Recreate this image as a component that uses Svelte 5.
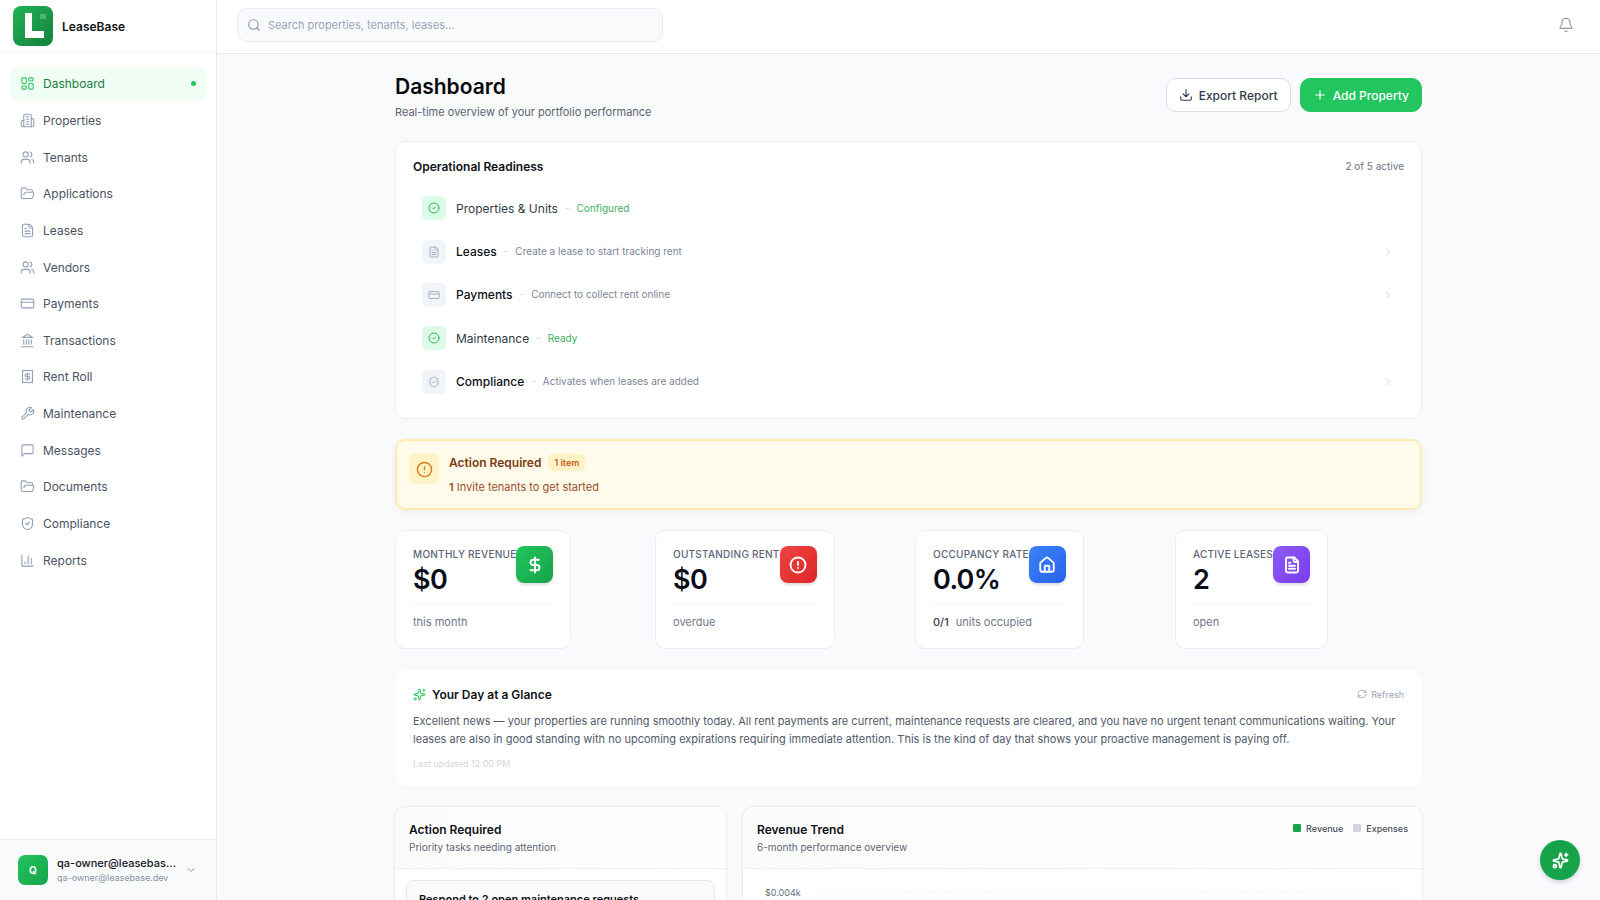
<script>
  const icons = {
    dashboard: '<rect x="3" y="3" width="7" height="9" rx="1.5"/><rect x="14" y="3" width="7" height="5" rx="1.5"/><rect x="14" y="12" width="7" height="9" rx="1.5"/><rect x="3" y="16" width="7" height="5" rx="1.5"/>',
    building: '<path d="M6 22V4a2 2 0 0 1 2-2h8a2 2 0 0 1 2 2v18Z"/><path d="M6 12H4a2 2 0 0 0-2 2v6a2 2 0 0 0 2 2h2"/><path d="M18 9h2a2 2 0 0 1 2 2v9a2 2 0 0 1-2 2h-2"/><path d="M10 6h4M10 10h4M10 14h4M10 18h4"/>',
    users: '<path d="M16 21v-2a4 4 0 0 0-4-4H6a4 4 0 0 0-4 4v2"/><circle cx="9" cy="7" r="4"/><path d="M22 21v-2a4 4 0 0 0-3-3.87"/><path d="M16 3.13a4 4 0 0 1 0 7.75"/>',
    folder: '<path d="m6 14 1.45-2.9A2 2 0 0 1 9.24 10H20a2 2 0 0 1 1.94 2.5l-1.55 6a2 2 0 0 1-1.94 1.5H4a2 2 0 0 1-2-2V5c0-1.1.9-2 2-2h3.93a2 2 0 0 1 1.66.9l.82 1.2a2 2 0 0 0 1.66.9H18a2 2 0 0 1 2 2v2"/>',
    file: '<path d="M15 2H6a2 2 0 0 0-2 2v16a2 2 0 0 0 2 2h12a2 2 0 0 0 2-2V7Z"/><path d="M14 2v4a2 2 0 0 0 2 2h4M10 9H8M16 13H8M16 17H8"/>',
    card: '<rect x="2" y="5" width="20" height="14" rx="2"/><path d="M2 10h20"/>',
    landmark: '<path d="M3 22h18M6 18v-7M10 18v-7M14 18v-7M18 18v-7M12 2l8 5H4Z"/>',
    receipt: '<path d="M4 2v20l2-1 2 1 2-1 2 1 2-1 2 1 2-1 2 1V2l-2 1-2-1-2 1-2-1-2 1-2-1-2 1Z"/><path d="M16 8h-6a2 2 0 1 0 0 4h4a2 2 0 1 1 0 4H8M12 17.5v-11"/>',
    wrench: '<path d="M14.7 6.3a1 1 0 0 0 0 1.4l1.6 1.6a1 1 0 0 0 1.4 0l3.77-3.77a6 6 0 0 1-7.94 7.94l-6.91 6.91a2.12 2.12 0 0 1-3-3l6.91-6.91a6 6 0 0 1 7.94-7.94l-3.76 3.76z"/>',
    message: '<path d="M21 15a2 2 0 0 1-2 2H7l-4 4V5a2 2 0 0 1 2-2h14a2 2 0 0 1 2 2z"/>',
    shield: '<path d="M20 13c0 5-3.5 7.5-7.66 8.95a1 1 0 0 1-.67-.01C7.5 20.5 4 18 4 13V6a1 1 0 0 1 1-1c2 0 4.5-1.2 6.24-2.72a1.17 1.17 0 0 1 1.52 0C14.51 3.81 17 5 19 5a1 1 0 0 1 1 1z"/><path d="m9 12 2 2 4-4"/>',
    chart: '<path d="M3 3v18h18M18 17V9M13 17V5M8 17v-3"/>',
    search: '<circle cx="11" cy="11" r="8"/><path d="m21 21-4.3-4.3"/>',
    bell: '<path d="M10.3 21a2 2 0 0 0 3.4 0"/><path d="M3.3 15.3A1 1 0 0 0 4 17h16a1 1 0 0 0 .7-1.7C19.4 14 18 12.5 18 8A6 6 0 0 0 6 8c0 4.5-1.4 6-2.7 7.3"/>',
    download: '<path d="M21 15v4a2 2 0 0 1-2 2H5a2 2 0 0 1-2-2v-4M7 10l5 5 5-5M12 15V3"/>',
    plus: '<path d="M5 12h14M12 5v14"/>',
    check: '<circle cx="12" cy="12" r="10"/><path d="m9 12 2 2 4-4"/>',
    alert: '<circle cx="12" cy="12" r="10"/><path d="M12 8v4M12 16h.01"/>',
    dollar: '<path d="M12 2v20M17 5H9.5a3.5 3.5 0 0 0 0 7h5a3.5 3.5 0 0 1 0 7H6"/>',
    house: '<path d="M15 21v-7a1 1 0 0 0-1-1h-4a1 1 0 0 0-1 1v7"/><path d="M3 10a2 2 0 0 1 .7-1.5l7-6a2 2 0 0 1 2.6 0l7 6A2 2 0 0 1 21 10v9a2 2 0 0 1-2 2H5a2 2 0 0 1-2-2z"/>',
    right: '<path d="m9 18 6-6-6-6"/>',
    down: '<path d="m6 9 6 6 6-6"/>',
    refresh: '<path d="M3 12a9 9 0 0 1 9-9 9.75 9.75 0 0 1 6.74 2.74L21 8M21 3v5h-5M21 12a9 9 0 0 1-9 9 9.75 9.75 0 0 1-6.74-2.74L3 16M8 16H3v5"/>',
    sparkles: '<path d="M11.02 2.81a1 1 0 0 1 1.96 0l1.05 5.56a2 2 0 0 0 1.6 1.6l5.56 1.05a1 1 0 0 1 0 1.96l-5.56 1.05a2 2 0 0 0-1.6 1.6l-1.05 5.56a1 1 0 0 1-1.96 0l-1.05-5.56a2 2 0 0 0-1.6-1.6l-5.56-1.05a1 1 0 0 1 0-1.96l5.56-1.05a2 2 0 0 0 1.6-1.6z"/><path d="M20 2v4M22 4h-4"/><circle cx="4" cy="20" r="2"/>'
  };

  const nav = [
    ['Dashboard', 'dashboard'], ['Properties', 'building'], ['Tenants', 'users'],
    ['Applications', 'folder'], ['Leases', 'file'], ['Vendors', 'users'],
    ['Payments', 'card'], ['Transactions', 'landmark'], ['Rent Roll', 'receipt'],
    ['Maintenance', 'wrench'], ['Messages', 'message'], ['Documents', 'folder'],
    ['Compliance', 'shield'], ['Reports', 'chart']
  ];

  const readiness = [
    { name: 'Properties & Units', note: 'Configured', icon: 'check', done: true },
    { name: 'Leases', note: 'Create a lease to start tracking rent', icon: 'file', done: false },
    { name: 'Payments', note: 'Connect to collect rent online', icon: 'card', done: false },
    { name: 'Maintenance', note: 'Ready', icon: 'check', done: true },
    { name: 'Compliance', note: 'Activates when leases are added', icon: 'shield', done: false }
  ];

  const stats = [
    { label: 'Monthly Revenue', value: '$0', note: 'this month', icon: 'dollar', tone: 'green' },
    { label: 'Outstanding Rent', value: '$0', note: 'overdue', icon: 'alert', tone: 'red' },
    { label: 'Occupancy Rate', value: '0.0%', strong: '0/1', note: 'units occupied', icon: 'house', tone: 'blue' },
    { label: 'Active Leases', value: '2', note: 'open', icon: 'file', tone: 'violet' }
  ];
</script>

{#snippet icon(name, size, weight = 2)}
  <svg class="icon" width={size} height={size} viewBox="0 0 24 24" fill="none" stroke="currentColor" stroke-width={weight} stroke-linecap="round" stroke-linejoin="round" aria-hidden="true">{@html icons[name]}</svg>
{/snippet}

<div class="shell">
  <aside class="sidebar">
    <div class="brand">
      <svg width="40" height="40" viewBox="0 0 40 40" aria-hidden="true">
        <defs>
          <linearGradient id="brand-fill" x1="0" y1="0" x2="1" y2="1">
            <stop offset="0" stop-color="#22b455" />
            <stop offset="1" stop-color="#15803d" />
          </linearGradient>
        </defs>
        <rect width="40" height="40" rx="8" fill="url(#brand-fill)" />
        <path d="M12 7h7v18h12v7H12z" fill="#fff" />
        <rect x="27" y="8" width="6" height="5" rx="1" fill="#5cc583" opacity=".7" />
      </svg>
      <span>LeaseBase</span>
    </div>
    <nav class="nav" aria-label="Main">
      {#each nav as [label, glyph], i}
        <a href="#{label}" class:active={i === 0}>
          {@render icon(glyph, 15, 1.75)}
          <span>{label}</span>
          {#if i === 0}<i class="dot"></i>{/if}
        </a>
      {/each}
    </nav>
    <button class="account" type="button">
      <span class="avatar">Q</span>
      <span class="who">
        <span class="who-name">qa-owner@leasebase.dev</span>
        <span class="who-mail">qa-owner@leasebase.dev</span>
      </span>
      {@render icon('down', 12)}
    </button>
  </aside>

  <div class="body">
    <header class="topbar">
      <label class="search">
        {@render icon('search', 14)}
        <input type="search" placeholder="Search properties, tenants, leases..." aria-label="Search" />
      </label>
      <button class="bell" type="button" aria-label="Notifications">{@render icon('bell', 16, 1.75)}</button>
    </header>

    <main class="main">
      <div class="content">
        <div class="page-head">
          <div>
            <h1>Dashboard</h1>
            <p>Real-time overview of your portfolio performance</p>
          </div>
          <div class="actions">
            <button class="btn" type="button">{@render icon('download', 14)}Export Report</button>
            <button class="btn primary" type="button">{@render icon('plus', 14)}Add Property</button>
          </div>
        </div>

        <section class="card readiness">
          <div class="row-head">
            <h2>Operational Readiness</h2>
            <span class="count">2 of 5 active</span>
          </div>
          <ul>
            {#each readiness as item}
              <li class:done={item.done}>
                <span class="tile">{@render icon(item.icon, 12)}</span>
                <span class="name">{item.name}</span>
                <span class="sep">-</span>
                <span class="note">{item.note}</span>
                {#if !item.done}<span class="go">{@render icon('right', 12)}</span>{/if}
              </li>
            {/each}
          </ul>
        </section>

        <section class="banner">
          <span class="banner-tile">{@render icon('alert', 17)}</span>
          <div>
            <div class="banner-head"><h2>Action Required</h2><span class="chip">1 item</span></div>
            <p><b>1</b> Invite tenants to get started</p>
          </div>
        </section>

        <section class="stats">
          {#each stats as s}
            <article class="card stat">
              <div class="stat-top">
                <div>
                  <div class="label">{s.label}</div>
                  <div class="value">{s.value}</div>
                </div>
                <span class="badge {s.tone}">{@render icon(s.icon, 18, 2.5)}</span>
              </div>
              <div class="stat-foot">
                {#if s.strong}<b>{s.strong}</b>{/if}<span>{s.note}</span>
              </div>
            </article>
          {/each}
        </section>

        <section class="glance">
          <div class="row-head">
            <h2><span class="spark">{@render icon('sparkles', 13)}</span>Your Day at a Glance</h2>
            <button class="refresh" type="button">{@render icon('refresh', 10)}Refresh</button>
          </div>
          <p>Excellent news — your properties are running smoothly today. All rent payments are current, maintenance requests are cleared, and you have no urgent tenant communications waiting. Your leases are also in good standing with no upcoming expirations requiring immediate attention. This is the kind of day that shows your proactive management is paying off.</p>
          <small>Last updated 12:00 PM</small>
        </section>

        <div class="panels">
          <section class="panel">
            <header>
              <div>
                <h2>Action Required</h2>
                <p>Priority tasks needing attention</p>
              </div>
            </header>
            <div class="tasks">
              <div class="task">Respond to 2 open maintenance requests</div>
            </div>
          </section>
          <section class="panel wide">
            <header>
              <div>
                <h2>Revenue Trend</h2>
                <p>6-month performance overview</p>
              </div>
              <div class="legend">
                <span><i class="rev"></i>Revenue</span>
                <span><i class="exp"></i>Expenses</span>
              </div>
            </header>
            <div class="plot">
              <span>$0.004k</span>
              <i class="gridline"></i>
            </div>
          </section>
        </div>
      </div>
    </main>
  </div>

  <button class="fab" type="button" aria-label="Assistant">{@render icon('sparkles', 17, 2.5)}</button>
</div>

<style>
  :global(body) {
    margin: 0;
    background: #f9fafc;
  }
  :global(*) {
    box-sizing: border-box;
  }
  .shell {
    display: flex;
    height: 100vh;
    overflow: hidden;
    font-family: Inter, "Liberation Sans", sans-serif;
    font-size: 12px;
    line-height: 17px;
    color: #0f1117;
  }
  button {
    font: inherit;
    cursor: pointer;
  }
  h1, h2, p, ul {
    margin: 0;
    padding: 0;
  }
  h2 {
    font-size: 12px;
    line-height: 17px;
    font-weight: 600;
  }
  .icon {
    display: block;
    flex: none;
  }

  .sidebar {
    flex: none;
    display: flex;
    flex-direction: column;
    width: 217px;
    background: #fff;
    border-right: 1px solid #e8ebf1;
  }
  .brand {
    display: flex;
    align-items: center;
    gap: 9px;
    height: 53px;
    padding-left: 13px;
    border-bottom: 1px solid #f3f4f7;
    font-weight: 600;
  }
  .nav {
    display: grid;
    grid-auto-rows: 1fr;
    gap: 3px;
    min-height: 510px;
    margin: 14px 10px auto;
  }
  .nav a {
    display: flex;
    align-items: center;
    gap: 8px;
    padding: 0 10px;
    border-radius: 10px;
    color: #4b5362;
    text-decoration: none;
  }
  .nav .icon {
    color: #94a0b8;
  }
  .nav .active {
    background: #f0fdf4;
    color: #1b7e40;
  }
  .nav .active .icon {
    color: #30c463;
  }
  .dot {
    width: 5px;
    height: 5px;
    margin-left: auto;
    border-radius: 50%;
    background: #22c55e;
  }
  .account {
    display: flex;
    align-items: center;
    gap: 9px;
    padding: 15px 18px;
    border: 0;
    border-top: 1px solid #eef0f4;
    background: #f9fafc;
    color: #8b93a3;
    text-align: left;
  }
  .avatar {
    display: grid;
    place-items: center;
    width: 30px;
    height: 30px;
    border-radius: 7px;
    background: linear-gradient(135deg, #22c55e, #16a34a);
    color: #fff;
    font-size: 10px;
    font-weight: 700;
  }
  .who {
    display: grid;
    width: 119px;
    white-space: nowrap;
  }
  .who-name {
    overflow: hidden;
    text-overflow: ellipsis;
    color: #14161c;
    font-size: 11px;
    font-weight: 500;
    line-height: 16px;
  }
  .who-mail {
    font-size: 9px;
    line-height: 14px;
  }

  .body {
    flex: 1;
    min-width: 0;
    display: flex;
    flex-direction: column;
  }
  .topbar {
    flex: none;
    display: flex;
    align-items: flex-start;
    justify-content: space-between;
    height: 54px;
    padding: 8px 20px;
    background: #fff;
    border-bottom: 1px solid #e5e8ee;
  }
  .search {
    display: flex;
    align-items: center;
    gap: 7px;
    width: 426px;
    height: 34px;
    padding: 0 9px;
    border: 1px solid #e8ebf1;
    border-radius: 10px;
    background: #f9fafc;
    color: #8d97ab;
  }
  .search input {
    flex: 1;
    padding: 0;
    border: 0;
    outline: 0;
    background: none;
    font: inherit;
    font-size: 11px;
  }
  .search input::placeholder {
    color: #9aa4b5;
  }
  .bell {
    padding: 9px 6px;
    border: 0;
    background: none;
    color: #9198a8;
  }

  .main {
    flex: 1;
    min-height: 0;
    padding: 19px 20px;
    overflow-y: auto;
    scrollbar-width: none;
  }
  .content {
    display: grid;
    gap: 20px;
    max-width: 1027px;
    margin: 0 auto;
  }
  .page-head {
    display: flex;
    align-items: flex-start;
    justify-content: space-between;
    padding-bottom: 1px;
  }
  h1 {
    margin-bottom: 4px;
    font-size: 21px;
    line-height: 27px;
    font-weight: 600;
    color: #08090c;
  }
  .page-head p {
    font-size: 11px;
    line-height: 16px;
    color: #5b6371;
  }
  .actions {
    display: flex;
    gap: 9px;
    padding-top: 5px;
  }
  .btn {
    display: flex;
    align-items: center;
    gap: 6px;
    height: 34px;
    padding: 0 12px;
    border: 1px solid #d9dde4;
    border-radius: 10px;
    background: #fff;
    color: #363c48;
    font-weight: 500;
  }
  .btn.primary {
    border-color: #22c55e;
    background: #22c55e;
    color: #fff;
  }
  .card {
    border: 1px solid #eaedf2;
    border-radius: 10px;
    background: #fff;
  }
  .row-head {
    display: flex;
    justify-content: space-between;
  }
  .readiness {
    padding: 16px 17px;
  }
  .count {
    font-size: 10px;
    color: #6b7386;
  }
  .readiness ul {
    display: grid;
    grid-auto-rows: 1fr;
    gap: 3px;
    min-height: 214px;
    margin-top: 13px;
    list-style: none;
  }
  .readiness li {
    display: flex;
    align-items: center;
    padding: 0 10px 0 9px;
    font-size: 12px;
  }
  .tile {
    display: grid;
    place-items: center;
    width: 24px;
    height: 24px;
    margin-right: 10px;
    border-radius: 5px;
    background: #f1f5f9;
    color: #a5adbc;
  }
  .done .tile {
    background: #dcfce7;
    color: #36b562;
  }
  .name {
    font-weight: 500;
  }
  .done .name {
    color: #343b48;
    font-weight: 400;
  }
  .sep {
    margin: 0 7px;
    font-size: 10px;
    color: #cdd2db;
  }
  .note {
    font-size: 10px;
    color: #7d8596;
  }
  .done .note {
    color: #3fae62;
  }
  .go {
    margin-left: auto;
    color: #cbd0d8;
  }

  .banner {
    display: flex;
    gap: 10px;
    padding: 13px 12px;
    border: 2px solid #fdebb0;
    border-radius: 10px;
    background: #fffbeb;
    box-shadow: 0 3px 8px rgba(20, 40, 30, 0.05);
  }
  .banner-tile {
    display: grid;
    place-items: center;
    width: 30px;
    height: 30px;
    border-radius: 5px;
    background: #fef3c7;
    color: #dd7a1c;
  }
  .banner-head {
    display: flex;
    gap: 7px;
    margin-bottom: 8px;
  }
  .banner h2 {
    color: #7a3a12;
  }
  .chip {
    padding: 0 6px;
    border-radius: 5px;
    background: #fef3c7;
    color: #c0601a;
    font-size: 9px;
    font-weight: 600;
  }
  .banner p {
    font-size: 11px;
    line-height: 16px;
    color: #99502c;
  }
  .banner b {
    font-weight: 600;
  }

  .stats {
    display: grid;
    grid-template-columns: repeat(4, 1fr);
    gap: 13px;
    justify-items: start;
  }
  .stat {
    padding: 15px 17px 18px;
    white-space: nowrap;
  }
  .stat-top {
    display: flex;
    align-items: flex-start;
    padding-bottom: 7px;
    border-bottom: 1px solid #f4f5f8;
  }
  .label {
    margin-bottom: 2px;
    font-size: 10px;
    line-height: 16px;
    font-weight: 500;
    letter-spacing: 0.025em;
    text-transform: uppercase;
    color: #5c6478;
  }
  .value {
    font-size: 27px;
    line-height: 32px;
    font-weight: 600;
    letter-spacing: -0.025em;
    color: #0b0d1a;
  }
  .badge {
    display: grid;
    place-items: center;
    width: 37px;
    height: 37px;
    border-radius: 8px;
    color: #fff;
    box-shadow: 0 2px 3px rgba(15, 23, 42, 0.14);
  }
  .green { background: linear-gradient(135deg, #22c55e, #16a34a); }
  .red { background: linear-gradient(135deg, #ef4444, #dc2626); }
  .blue { background: linear-gradient(135deg, #3b82f6, #2563eb); }
  .violet { background: linear-gradient(135deg, #8b5cf6, #7c3aed); }
  .stat-foot {
    display: flex;
    gap: 7px;
    padding-top: 10px;
    font-size: 11px;
    line-height: 16px;
    color: #6f778a;
  }
  .stat-foot b {
    color: #3a4150;
    font-weight: 500;
  }

  .glance {
    padding: 17px 18px;
    border-radius: 13px;
    background: #fff;
    box-shadow: 0 0 1px rgba(15, 23, 42, 0.08);
  }
  .glance h2 {
    display: flex;
    align-items: center;
    gap: 6px;
  }
  .spark {
    color: #36c968;
  }
  .refresh {
    display: flex;
    align-items: center;
    gap: 4px;
    height: 16px;
    padding: 0;
    border: 0;
    background: none;
    color: #9ba3b3;
    font-size: 9px;
  }
  .glance p {
    margin: 9px 0 10px;
    font-size: 11px;
    line-height: 18px;
    color: #525a69;
  }
  .glance small {
    display: block;
    font-size: 9px;
    line-height: 12px;
    color: #d3d7de;
  }

  .panels {
    display: grid;
    grid-template-columns: repeat(3, 1fr);
    gap: 17px;
  }
  .panel {
    overflow: hidden;
    border-radius: 10px;
    background: #fff;
    box-shadow: 0 0 2px rgba(15, 23, 42, 0.22);
  }
  .wide {
    grid-column: span 2;
  }
  .panel header {
    display: flex;
    justify-content: space-between;
    padding: 14px 14px 14px;
    border-bottom: 1px solid #eff0f3;
    background: linear-gradient(90deg, #fbfbfc, #fefefe);
  }
  .panel header p {
    margin-top: 2px;
    font-size: 10px;
    line-height: 14px;
    color: #5d6573;
  }
  .legend {
    display: flex;
    gap: 10px;
    font-size: 9px;
    font-weight: 500;
    color: #464d5a;
  }
  .legend span {
    display: flex;
    align-items: center;
    gap: 5px;
    height: 14px;
  }
  .legend i {
    width: 8px;
    height: 8px;
    border-radius: 1px;
  }
  .rev { background: #16a34a; }
  .exp { background: #d1d5db; }
  .tasks {
    padding: 11px;
  }
  .task {
    padding: 10px 12px;
    border: 1px solid #e6e8ec;
    border-radius: 7px;
    background: #fafafb;
    font-size: 11px;
    font-weight: 600;
  }
  .plot {
    display: flex;
    gap: 14px;
    min-height: 200px;
    padding: 17px 25px 0 22px;
    font-size: 9px;
    line-height: 14px;
    color: #666d79;
  }
  .gridline {
    flex: 1;
    height: 1px;
    margin-top: 5px;
    border-top: 1px dashed #f3f4f6;
  }

  .fab {
    position: absolute;
    right: 20px;
    bottom: 20px;
    display: grid;
    place-items: center;
    width: 40px;
    height: 40px;
    padding: 0;
    border: 0;
    border-radius: 50%;
    background: #16a34a;
    color: #fff;
    box-shadow: 0 2px 4px rgba(15, 23, 42, 0.18);
  }
</style>
